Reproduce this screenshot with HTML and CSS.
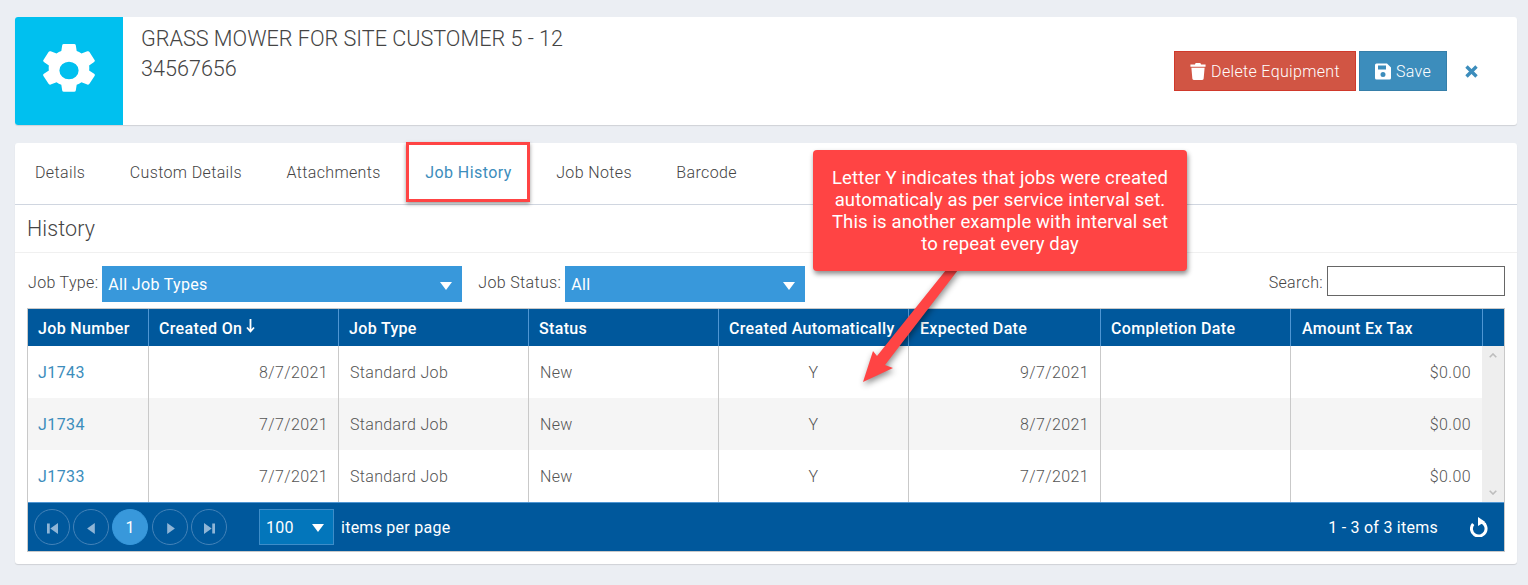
FILE: index.html
```html
<!DOCTYPE html>
<html lang="en">
<head>
<meta charset="utf-8">
<title>Equipment</title>
<link rel="stylesheet" href="styles.css">
</head>
<body>
<header class="card head">
  <div class="tile">
    <svg class="gear" viewBox="3 0 46 52" preserveAspectRatio="none"><path fill="#fff" fill-rule="evenodd" d="M21.5 0h9a1.5 1.5 0 0 1 1.5 1.3l.8 5.6c1.5.6 2.9 1.4 4.2 2.4l5.2-2.1a1.5 1.5 0 0 1 1.9.6l4.5 7.8a1.5 1.5 0 0 1-.4 2l-4.4 3.4c.2 1.6.2 3.3 0 4.9l4.4 3.4a1.5 1.5 0 0 1 .4 2l-4.5 7.8a1.5 1.5 0 0 1-1.9.6l-5.2-2.1c-1.3 1-2.7 1.8-4.2 2.4l-.8 5.6a1.5 1.5 0 0 1-1.5 1.3h-9a1.5 1.5 0 0 1-1.5-1.3l-.8-5.6c-1.5-.6-2.9-1.4-4.2-2.4l-5.2 2.1a1.5 1.5 0 0 1-1.9-.6l-4.5-7.8a1.5 1.5 0 0 1 .4-2l4.4-3.4a19 19 0 0 1 0-4.9l-4.4-3.4a1.5 1.5 0 0 1-.4-2l4.5-7.8a1.5 1.5 0 0 1 1.9-.6l5.200 2.100c1.300-1 2.700-1.800 4.200-2.400l.8-5.600A1.500 1.500 0 0 1 21.500 0zM26 17.500a8.500 8.500 0 1 0 0 17 8.500 8.500 0 0 0 0-17z"/></svg>
  </div>
  <div class="title">
    <div>GRASS MOWER FOR SITE CUSTOMER 5 - 12</div>
    <div>34567656</div>
  </div>
  <div class="actions">
    <button class="btn btn-del">
      <svg class="ico" viewBox="0 0 16 18"><path fill="#fff" d="M5.500 0h5l.7 1.500H16V4H0V1.500h4.800zM1 5h14l-1 11.500a1.500 1.500 0 0 1-1.500 1.500h-9A1.500 1.500 0 0 1 2 16.500z"/></svg>
      Delete Equipment
    </button>
    <button class="btn btn-save">
      <svg class="ico" viewBox="0 0 16 16"><path fill="#fff" fill-rule="evenodd" d="M1.500 0H12l4 4v10.500a1.500 1.500 0 0 1-1.500 1.500h-13A1.500 1.500 0 0 1 0 14.500v-13A1.500 1.500 0 0 1 1.500 0zM3 2v4h8V2zm5 6.500a2.500 2.500 0 1 0 0 5 2.500 2.500 0 0 0 0-5z"/></svg>
      Save
    </button>
    <svg class="close" viewBox="0 0 13 13"><path fill="none" stroke="#3c8dbc" stroke-width="3.400" d="M1.500 1.500l10 10m0-10l-10 10"/></svg>
  </div>
</header>

<main class="card body">
  <nav class="tabs">
    <a class="tab">Details</a>
    <a class="tab">Custom Details</a>
    <a class="tab">Attachments</a>
    <a class="tab tab-on">Job History</a>
    <a class="tab">Job Notes</a>
    <a class="tab">Barcode</a>
  </nav>
  <h2 class="section">History</h2>
  <div class="filters">
    <label class="flabel">Job Type:</label>
    <div class="select select-type">All Job Types<i class="caret"></i></div>
    <label class="flabel flabel-status">Job Status:</label>
    <div class="select select-status">All<i class="caret"></i></div>
    <label class="flabel flabel-search">Search:</label>
    <input class="search" type="text" aria-label="Search">
  </div>

  <section class="grid">
    <div class="row row-head">
      <div class="c">Job Number</div>
      <div class="c">Created On<svg class="sort" viewBox="0 0 9 14"><path fill="none" stroke="#fff" stroke-width="1.800" d="M4.500 0v12M1 8.500l3.500 4 3.500-4"/></svg></div>
      <div class="c">Job Type</div>
      <div class="c">Status</div>
      <div class="c">Created Automatically</div>
      <div class="c c-plus">Expected Date</div>
      <div class="c">Completion Date</div>
      <div class="c c-plus">Amount Ex Tax</div>
      <div class="c c-sb"></div>
    </div>
    <div class="rows">
      <div class="rows-main">
        <div class="row">
          <div class="c"><a class="link">J1743</a></div><div class="c r">8/7/2021</div><div class="c">Standard Job</div><div class="c">New</div><div class="c m">Y</div><div class="c r r-x">9/7/2021</div><div class="c"></div><div class="c r r-x">$0.00</div>
        </div>
        <div class="row alt">
          <div class="c"><a class="link">J1734</a></div><div class="c r">7/7/2021</div><div class="c">Standard Job</div><div class="c">New</div><div class="c m">Y</div><div class="c r r-x">8/7/2021</div><div class="c"></div><div class="c r r-x">$0.00</div>
        </div>
        <div class="row">
          <div class="c"><a class="link">J1733</a></div><div class="c r">7/7/2021</div><div class="c">Standard Job</div><div class="c">New</div><div class="c m">Y</div><div class="c r r-x">7/7/2021</div><div class="c"></div><div class="c r r-x">$0.00</div>
        </div>
      </div>
      <div class="scrollbar">
        <svg class="sb-arrow" viewBox="0 0 8 5"><path fill="none" stroke="#bdbdbd" stroke-width="1.600" d="M.7 4.300L4 1l3.300 3.300"/></svg>
        <svg class="sb-arrow" viewBox="0 0 8 5"><path fill="none" stroke="#bdbdbd" stroke-width="1.600" d="M.7.700L4 4l3.300-3.300"/></svg>
      </div>
    </div>
    <footer class="pager">
      <div class="pbtn"><svg class="pi" viewBox="0 0 10 10"><path d="M0 .5h2.500v9H0zM10 0v10L3 5z"/></svg></div>
      <div class="pbtn"><svg class="pi" viewBox="0 0 10 10"><path d="M8 0v10L1 5z"/></svg></div>
      <div class="pbtn pbtn-on">1</div>
      <div class="pbtn pbtn-gap"><svg class="pi" viewBox="0 0 10 10"><path d="M2 0v10L9 5z"/></svg></div>
      <div class="pbtn"><svg class="pi" viewBox="0 0 10 10"><path d="M0 0v10L7 5zM7.500 .5H10v9H7.500z"/></svg></div>
      <div class="psize">100<i class="caret"></i></div>
      <span class="plabel">items per page</span>
      <span class="pinfo">1 - 3 of 3 items</span>
      <svg class="refresh" viewBox="0 0 18 20"><path fill="none" stroke="#fff" stroke-width="3" d="M11.500 5A7.300 7.300 0 1 1 3.200 7"/><path fill="#fff" d="M8 0l7 4.800L8 9z"/></svg>
    </footer>
  </section>
</main>

<div class="hl" aria-hidden="true"></div>
<svg class="arrow" viewBox="0 0 1528 585" aria-hidden="true"><path fill="#ff4444" d="M946 270h12l-73 95 8 3-30 14 10-31 4 5z"/></svg>
<div class="note">Letter Y indicates that jobs were created automaticaly as per service interval set. This is another example with interval set to repeat every day</div>
</body>
</html>
```
FILE: styles.css
```css
* { box-sizing: border-box; }
html, body { margin: 0; height: 585px; overflow: hidden; }
body {
  background: #ebeef3;
  padding: 17px 11px 0 15px;
  font-family: Roboto, "Liberation Sans", sans-serif;
  font-weight: 300;
  font-size: 16px;
  letter-spacing: .33px;
  color: #444;
  position: relative;
}
.card {
  background: #fff;
  border-radius: 3px;
  box-shadow: 0 1px 1px rgba(0, 0, 0, .12);
}
.head { display: flex; height: 108px; }
.tile {
  width: 108px;
  background: #00c0ef;
  border-radius: 3px 0 0 3px;
  display: flex;
  align-items: center;
  justify-content: center;
}
.gear { width: 52px; height: 53px; margin-top: -1px; }
.title {
  padding: 7px 0 0 18px;
  font-size: 21.600px;
  letter-spacing: 0;
  line-height: 30px;
  color: #444;
}
.actions {
  margin-left: auto;
  display: flex;
  align-items: flex-start;
  padding-top: 34px;
  padding-right: 39px;
}
.btn {
  height: 40px;
  font: 300 16px Roboto, "Liberation Sans", sans-serif;
  letter-spacing: .33px;
  color: #fff;
  display: flex;
  align-items: center;
  justify-content: center;
  gap: 5px;
  padding: 0;
  border-radius: 0;
}
.btn-del { width: 182px; background: #d15544; border: 1px solid #d0392b; margin-right: 3px; }
.btn-save { width: 88px; background: #3c8dbc; border: 1px solid #367fa9; }
.ico { width: 16px; height: 17px; }
.close { width: 13px; height: 13px; margin: 14px 0 0 18px; }

.body { margin-top: 18px; height: 421px; padding: 0; }
.tabs {
  display: flex;
  height: 62px;
  padding: 0 0 2px 20px;
  gap: 44.500px;
  border-bottom: 1px solid #d0d6e0;
  align-items: center;
}
.tab { color: #444; letter-spacing: .36px; }
.tab-on { color: #3c8dbc; font-weight: 400; letter-spacing: .42px; }
.section {
  margin: 0;
  height: 48px;
  padding: 0 12px;
  font-size: 21.500px;
  font-weight: 300;
  letter-spacing: .1px;
  line-height: 47px;
  color: #444;
  border-bottom: 1px solid #f0f0f0;
}
.filters {
  display: flex;
  align-items: flex-start;
  height: 55px;
  padding: 13px 12px 0 13px;
}
.flabel { line-height: 34px; color: #444; margin-right: 4px; }
.flabel-status { margin-left: 16px; }
.flabel-search { margin-left: auto; }
.select {
  height: 36px;
  background: #3898db;
  color: #fff;
  font-weight: 400;
  display: flex;
  align-items: center;
  justify-content: space-between;
  padding: 2px 8px 0 6px;
  line-height: 34px;
}
.select-type { width: 360px; }
.select-status { width: 240px; }
.caret {
  width: 0;
  height: 0;
  border: 6px solid transparent;
  border-top: 8px solid #fff;
  border-bottom: 0;
  margin-right: 2px;
  margin-top: 2px;
}
.search {
  width: 178px;
  height: 30px;
  border: 1px solid #666;
  padding: 0;
  background: #fff;
}

.grid {
  margin: 0 12px 0 12px;
  border: 1px solid #c9c9c9;
  height: 244px;
}
.row { display: grid; grid-template-columns: 120px 190px 190px 190px 190px 192px 190px 192px; height: 52px; color: #555; }
.row-head {
  grid-template-columns: 120px 190px 190px 190px 190px 192px 190px 192px 1fr;
  height: 37px;
  background: #00589c;
  color: #fff;
  font-weight: 500;
}
.c {
  padding: 0 11px;
  border-left: 1px solid #c9c9c9;
  display: flex;
  align-items: center;
  white-space: nowrap;
}
.c:first-child { border-left: 0; padding-left: 10px; }
.row-head .c { border-left-color: #4f96d3; padding-top: 2px; }
.row-head .c:nth-child(n+2) { padding-left: 10px; }
.row-head .c-plus:nth-child(n+2) { padding-left: 11px; }
.sort { width: 9px; height: 14px; margin: -5px 0 0 4px; }
.c-sb { padding: 0; }
.r { justify-content: flex-end; padding-right: 10px; letter-spacing: .37px; }
.r-x { padding-right: 11px; }
.m { justify-content: center; font-weight: 300; }
.alt { background: #f5f5f5; }
.link { color: #3c8dbc; font-weight: 400; letter-spacing: .42px; }
.rows { display: flex; height: 156px; }
.rows-main { width: 1454px; }
.scrollbar {
  flex: 1;
  background: #eee;
  display: flex;
  flex-direction: column;
  justify-content: space-between;
  align-items: center;
  padding: 7px 0;
}
.sb-arrow { width: 8px; height: 5px; }

.pager {
  background: #00589c;
  height: 49px;
  border-top: 1px solid #4f96d3;
  display: flex;
  align-items: center;
  padding: 0 16px 0 6px;
  color: #fff;
  font-weight: 400;
  letter-spacing: .25px;
  gap: 3px;
}
.pbtn {
  width: 36px;
  height: 36px;
  border-radius: 50%;
  border: 1px solid #4382b8;
  display: flex;
  align-items: center;
  justify-content: center;
}
.pbtn-on { background: #3898db; border-color: #3898db; }
.pbtn-gap { margin-left: 1px; }
.pi { width: 11px; height: 11px; fill: #8fb5d6; margin-top: 2px; }
.psize {
  width: 75px;
  height: 36px;
  margin-left: 29px;
  background: #0376bb;
  border: 1px solid #3d8dc9;
  display: flex;
  align-items: center;
  justify-content: space-between;
  padding: 0 7px 0 6px;
  font-size: 16px;
}
.plabel { margin-left: 4px; }
.pinfo { margin-left: auto; margin-right: 29px; }
.refresh { width: 18px; height: 20px; }

.hl {
  position: absolute;
  left: 406px;
  top: 142px;
  width: 124px;
  height: 60px;
  border: 3px solid #ff4444;
  box-shadow: 0 2px 4px rgba(0, 0, 0, .4);
}
.arrow {
  position: absolute;
  left: 0;
  top: 0;
  width: 1528px;
  height: 585px;
  filter: drop-shadow(1px 3px 3px rgba(0, 0, 0, .45));
  pointer-events: none;
}
.note {
  position: absolute;
  left: 813px;
  top: 150px;
  width: 374px;
  height: 121px;
  padding: 17px 16px 0;
  background: #ff4444;
  color: #fff;
  border-radius: 4px;
  font-family: Roboto, "Liberation Sans", sans-serif;
  font-weight: 400;
  font-size: 18.500px;
  letter-spacing: .14px;
  line-height: 22px;
  text-align: center;
  box-shadow: 1px 3px 5px rgba(0, 0, 0, .45);
}
```
